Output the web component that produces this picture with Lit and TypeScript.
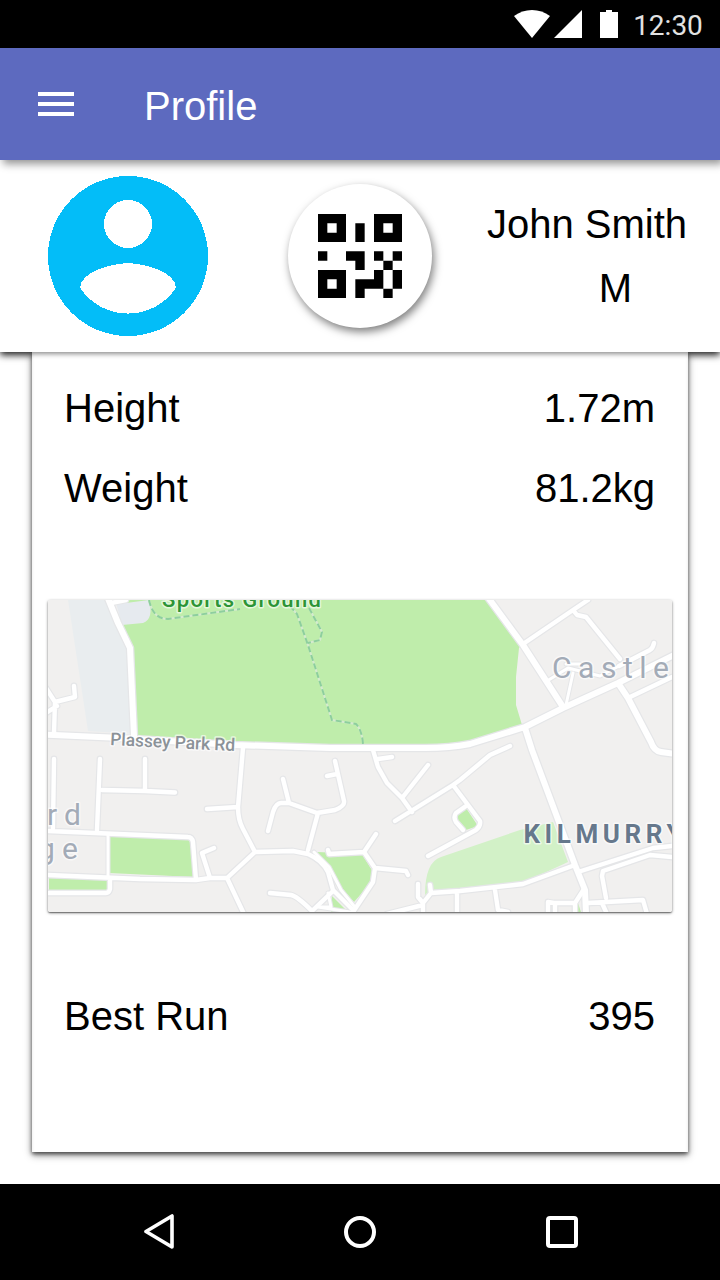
import { LitElement, html, svg, css } from "lit";
import { customElement } from "lit/decorators.js";

const QR_CELLS = [
  "M0 0h3v3h-3zM1 1v1h1v-1z",
  "M6 0h3v3h-3zM7 1v1h1v-1z",
  "M0 6h3v3h-3zM1 7v1h1v-1z",
  "M4 1h1v2h-1z",
  "M0 4h1v1h-1z",
  "M3 4h2v2h-1v-1h-1z",
  "M6 4h1v1h-1zM8 4h1v1h-1zM7 5h1v1h-1z",
  "M6 6h1v2h-2v1h-1v-2h2z",
  "M8 6h1v2h-1zM7 8h1v1h-1z",
].join("");

const MINOR_ROADS = [
  "M46 688L55 702L75 697L74 686M55 702L54 733M46 713L57 706",
  "M111 603L126 600",
  "M523 644L573 610L588 600M573 610L577 615L586 617L620 659",
  "M619 666L650 650Q653 648 654 643",
  "M628 698L672 677",
  "M54 759L53 828M100 759L97 830M102 790L145 791L175 792.500M145 759V790",
  "M48 831L188 837Q192 837 193 842L196 880",
  "M48 875L140 879L196 880L210 878H227",
  "M48 893H106Q109 893 110 889V880",
  "M210 878L202 853L214 848",
  "M207 809L238 807",
  "M243 748L238 807Q238 820 243 829L255 852L227 878L244 914",
  "M255 852L293 851L308 854Q322 860 328 872L333 890L353 910",
  "M308 850L318 813M268 831L273 812Q276 803 281 803H289L317 813L335 810Q345 806 344 801L335 761M327 776L337 774M289 803L283 779",
  "M328 850L329 854L364 852L376 834M364 852L375 868L373 882L353 912M375 868L406 871L408 875",
  "M270 893L291 895Q297 896 312 911L333 891",
  "M373 750L378 767L387 783L402 798L412 812M378 759L392 757M402 798L428 765",
  "M510 746L490 755L460 780L453 785L395 821",
  "M453 785L480 821Q481 826 476 830L428 856M466 806L456 813Q453 817 456 822L463 830",
  "M418 884V897L423 903V914M430 885L431 893L423 903M423 905L387 914",
  "M431 893L460 891L523 884L575 865",
  "M578 872L653 848L672 846M606 898L602 876L603 871L650 855L672 857",
  "M588 903L643 900L647 914M602 903L607 914",
  "M495 890L498 910L508 912M548 914V902L554 903H575L584 889M555 903V914M575 903V914M457 892V914",
];

const MAIN_ROADS = [
  "M44 734.500L110 737.500L235 745L330 748H425Q450 748 470 744L525 727L563 708L618 683L676 654",
  "M107 596L118 623L130 648L134 736",
  "M487 596L523 645L563 707",
  "M618 683L628 698L651 742Q654 751 661 752L676 754",
  "M525 728L532 750L575 865L585 890L586 914",
];

const THIN_ROADS = [
  "M108 834V876",
  "M547 681L568 668L600 676L619 666M573 673L566 705M566 664H580",
  "M314 852L329 867L341 890L354 906M328 893L331 907L318 907L350 912",
];

@customElement("status-bar")
export class StatusBar extends LitElement {
  static styles = css`
    :host {
      display: flex;
      justify-content: flex-end;
      align-items: center;
      height: 48px;
      padding-right: 16px;
      background: #000;
      color: #e2e2e2;
      font: 400 28px/48px Roboto, sans-serif;
    }
    .icons {
      margin-right: 14px;
    }
    .time {
      width: 72px;
      text-align: center;
      padding-top: 4px;
    }
  `;
  render() {
    return html`
      <svg class="icons" width="104" height="28" viewBox="0 0 104 28" fill="#fff">
        <path d="M18 28L0 6Q8 0 18 0T36 6z" />
        <path d="M68 0V28H40z" />
        <path d="M86 2H92V0H98V2H104V28H86z" />
      </svg>
      <span class="time">12:30</span>
    `;
  }
}

@customElement("area-map")
export class AreaMap extends LitElement {
  static styles = css`
    :host {
      display: block;
      height: 312px;
      border-radius: 2px;
      box-shadow: 0 1px 3px rgba(0, 0, 0, 0.5), 0 1px 1px rgba(0, 0, 0, 0.3);
    }
    .map {
      display: block;
      border-radius: 2px;
      font-family: Roboto, sans-serif;
    }
    .road {
      fill: none;
      stroke-linecap: round;
      stroke-linejoin: round;
    }
    .casing {
      stroke: #e5e6e8;
    }
    .surface {
      stroke: #fff;
    }
    .trail {
      fill: none;
      stroke: #8dcf9d;
      stroke-width: 2;
      stroke-dasharray: 6 3;
    }
    .trail-base {
      fill: none;
      stroke: #d5eacf;
      stroke-width: 2;
    }
    .label {
      paint-order: stroke;
      stroke: #fff;
      stroke-opacity: 0.6;
      stroke-width: 3px;
      stroke-linejoin: round;
    }
    .district {
      font-size: 30px;
      fill: #a3abb7;
    }
  `;

  private roads(paths: string[], width: number, kind: string) {
    return svg`<path class="road ${kind}" stroke-width=${width} d=${paths.join("")} />`;
  }

  render() {
    const trails =
      "M149 600Q153 619 168 619L240 609M290 606L297 614L308 645L332 720L356 724Q362 730 363 744M309 608L322 632L320 640L308 643";
    return html`
      <svg class="map" width="624" height="312" viewBox="48 600 624 312">
        <rect x="48" y="600" width="624" height="312" fill="#f1f0ef" />
        <path fill="#e9edef" d="M68 600H108L130 648L133 734L88 731z" />
        <path fill="#bfedab" d="M119 600H490L523 643L519 648L516 677V705L522 725L470 743L425 747H330L235 744L136 736L131 648L121 625z" />
        <path fill="#e6eaef" d="M116 603H126L149 600Q154 619 143 623L122 625z" />
        <path fill="#d2f1c7" d="M425 895Q425 862 441 857L520 830L553 822L568 862L527 881L460 888L432 890z" />
        <path fill="#bfedab" d="M110 837L191 837L194 877L109 873zM49 878L107 880V890H49zM317 852L362 854L373 872L370 884L354 902L342 888L328 867zM332 896L348 912H331zM466 808L478 826L463 831L455 817zM577 900L581 912H577z" />
        ${this.roads(THIN_ROADS, 5, "casing")}
        ${this.roads(MINOR_ROADS, 6.8, "casing")}
        ${this.roads(MAIN_ROADS, 8.5, "casing")}
        ${this.roads(THIN_ROADS, 3, "surface")}
        ${this.roads(MINOR_ROADS, 4.4, "surface")}
        ${this.roads(MAIN_ROADS, 6, "surface")}
        <path class="trail-base" d=${trails} />
        <path class="trail" d=${trails} />
        <text class="label" x="162" y="607" font-size="22" font-weight="500" fill="#2c9436" textLength="159">Sports Ground</text>
        <text class="label" x="110" y="745" font-size="17.500" font-weight="500" fill="#8b9298" textLength="125" transform="rotate(2.800 110 745)">Plassey Park Rd</text>
        <text class="label district" x="552" y="678" textLength="117">Castle</text>
        <text class="label district" x="47" y="825" textLength="34">rd</text>
        <text class="label district" x="38" y="859" textLength="40">ge</text>
        <text class="label" x="523.500" y="843" font-size="26" font-weight="700" fill="#66788c" textLength="159">KILMURRY</text>
      </svg>
    `;
  }
}

@customElement("app-root")
export class AppRoot extends LitElement {
  static styles = css`
    :host {
      display: flex;
      flex-direction: column;
      width: 720px;
      height: 1280px;
      overflow: hidden;
      background: #fff;
      color: #000;
      font: 40px/48px "Liberation Sans", Arial, sans-serif;
    }
    .toolbar {
      display: flex;
      align-items: center;
      gap: 70px;
      flex: none;
      height: 112px;
      padding-left: 38px;
      box-sizing: border-box;
      background: #5d6abf;
      color: #fff;
      z-index: 3;
      box-shadow: 3px 4px 8px rgba(0, 0, 0, 0.42);
    }
    .title {
      padding-top: 4px;
    }
    .summary {
      display: flex;
      align-items: center;
      flex: none;
      height: 192px;
      padding: 0 33px 0 48px;
      box-sizing: border-box;
      background: #fff;
      z-index: 1;
      box-shadow: 0 3px 7px rgba(0, 0, 0, 0.9);
    }
    .qr {
      display: grid;
      place-items: center;
      width: 144px;
      height: 144px;
      margin-left: 80px;
      border-radius: 50%;
      background: #fff;
      box-shadow: 2px 4px 8px rgba(0, 0, 0, 0.5);
    }
    .person {
      display: flex;
      flex-direction: column;
      align-items: flex-end;
      gap: 16px;
      margin-left: auto;
      white-space: nowrap;
    }
    .sex {
      padding-right: 55px;
    }
    .content {
      flex: 1;
      padding: 0 32px 32px;
      overflow: hidden;
      z-index: 2;
    }
    .card {
      display: flex;
      flex-direction: column;
      height: 800px;
      padding: 32px 16px 0;
      box-sizing: border-box;
      background: #fff;
      box-shadow: inset 0 5px 5px -3px rgba(0, 0, 0, 0.45), 0 2px 4px rgba(0, 0, 0, 0.6), 0 3px 8px rgba(0, 0, 0, 0.4);
    }
    .row {
      display: flex;
      justify-content: space-between;
      padding: 0 17px 0 16px;
      margin-bottom: 32px;
    }
    .map {
      margin: 56px 0 80px;
    }
    .nav {
      display: flex;
      align-items: center;
      justify-content: space-between;
      flex: none;
      height: 96px;
      padding: 0 142px 0 144px;
      box-sizing: border-box;
      background: #000;
    }
  `;

  render() {
    return html`
      <status-bar></status-bar>
      <header class="toolbar">
        <svg width="36" height="24" viewBox="0 0 36 24" fill="#fff">
          <path d="M0 0H36V4H0zM0 10H36V14H0zM0 20H36V24H0z" />
        </svg>
        <span class="title">Profile</span>
      </header>
      <section class="summary">
        <svg width="160" height="160" viewBox="2 2 20 20" fill="#03bdf8" shape-rendering="crispEdges">
          <path
            d="M12 2C6.480 2 2 6.480 2 12s4.480 10 10 10 10-4.480 10-10S17.520 2 12 2zm0 3c1.660 0 3 1.340 3 3s-1.340 3-3 3-3-1.340-3-3 1.340-3 3-3zm0 14.200c-2.500 0-4.710-1.280-6-3.220.03-1.990 4-3.080 6-3.080 1.990 0 5.970 1.090 6 3.080-1.290 1.940-3.500 3.220-6 3.220z"
          />
        </svg>
        <div class="qr">
          <svg width="84" height="84" viewBox="0 0 9 9"><path fill-rule="evenodd" d=${QR_CELLS} /></svg>
        </div>
        <div class="person">
          <span>John Smith</span>
          <span class="sex">M</span>
        </div>
      </section>
      <main class="content">
        <div class="card">
          <div class="row"><span>Height</span><span>1.72m</span></div>
          <div class="row"><span>Weight</span><span>81.2kg</span></div>
          <area-map class="map"></area-map>
          <div class="row"><span>Best Run</span><span>395</span></div>
        </div>
      </main>
      <nav class="nav">
        <svg width="30" height="36" viewBox="0 0 30 36" fill="none" stroke="#fff" stroke-width="3.600" stroke-linejoin="round">
          <path d="M2 17.500L28 2V33z" />
        </svg>
        <svg width="32" height="32" viewBox="0 0 32 32" fill="none" stroke="#fff" stroke-width="4"><circle cx="16" cy="16" r="14" /></svg>
        <svg width="32" height="32" viewBox="0 0 32 32" fill="none" stroke="#fff" stroke-width="4"><rect x="2" y="2" width="28" height="28" rx="2" /></svg>
      </nav>
    `;
  }
}
